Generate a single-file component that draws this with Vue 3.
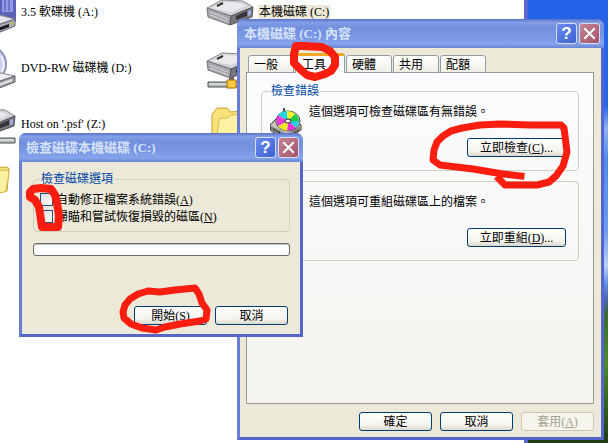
<template>
  <div class="desktop">
    <div class="explorer">
      <ul class="files">
        <li v-for="(f, i) in files" :key="i" class="file">
          <svg class="file-icon" viewBox="0 0 48 48" aria-hidden="true">
            <template v-if="f.kind === 'floppy'">
              <path d="M8 4H50V33H8Z" fill="#5a63b8" stroke="#30367c" />
              <path d="M34 4H45V24H34Z" fill="#8f9be6" />
              <path d="M37 4V23M41 4V23" stroke="#4c55a8" />
              <path d="M6 34L31 27L47 31L24 39Z" fill="#e4e4ec" stroke="#88888e" />
              <path d="M24 39L47 31V38L25 47Z" fill="#a9a9b6" stroke="#66666e" />
              <path d="M27 41L41 36V39L27 44Z" fill="#16161c" />
              <path d="M42 35L45 34V36L42 37Z" fill="#b8c43c" />
            </template>
            <template v-else-if="f.kind === 'dvd'">
              <circle cx="20" cy="20" r="18" fill="#cdd0f0" stroke="#8f92b6" stroke-width="2" />
              <circle cx="20" cy="20" r="5" fill="#fff" stroke="#8e91b4" />
              <path d="M33 12Q38 20 34 28" fill="none" stroke="#f2f2ff" stroke-width="2" />
              <path d="M4 36L28 28L47 32L24 40Z" fill="#ececf0" stroke="#88888e" />
              <path d="M24 40L47 32V38L26 46Z" fill="#a2a2a8" stroke="#5c5c62" />
              <path d="M28 42L44 36" stroke="#e6e6ea" stroke-width="2" />
            </template>
            <template v-else-if="f.kind === 'folder'">
              <path d="M6 36V15Q6 13 8 12L10 9Q11 8 13 8L20 8Q22 8 23 10L24 12L38 11Q41 11 41 14L39 35L10 42Z" fill="#f7e27c" stroke="#c9a22c" />
              <path d="M10 41L13 20Q13 18 16 18L22 18L25 15L38 14Q41 14 41 17L38 34Q38 36 36 36Z" fill="#fdf1a4" stroke="#d9b84c" />
            </template>
            <g v-else :transform="f.kind === 'net' ? 'translate(0 -3)' : null">
              <path d="M1 20L16 12L37 13L47 19L25 28Z" fill="#d4d4d8" stroke="#88888e" />
              <path d="M6 20L18 14L34 15L40 18L25 24Z" fill="#eaeaec" />
              <path d="M1 20L25 28L24 37L2 29Z" fill="#a6a6ac" stroke="#77777c" />
              <path d="M25 28L47 19L46 29L24 37Z" fill="#77777e" stroke="#55555b" />
              <path d="M4 24L22 31M4 27L22 34" stroke="#d4d4d8" />
              <path d="M30 28L41 23V28L30 32Z" fill="#33333a" />
              <path d="M42 23L45 22V27L42 28Z" fill="#a4a8e4" />
              <path d="M11 18L17 15" stroke="#333" stroke-width="2" />
            </g>
            <g v-if="f.kind === 'net'">
              <path d="M23 33H28V38H23Z" fill="#66666c" />
              <path d="M2 38H47V43H2Z" fill="#b4bcbc" stroke="#4a4e50" />
              <path d="M3 40H46" stroke="#eef4f2" />
              <path v-if="i % 2" d="M21 36H30V44H21Z" fill="#ffcb3c" stroke="#a86c08" />
            </g>
          </svg>
          <span class="file-name" :class="{ selected: f.selected }">{{ f.name }}</span>
        </li>
      </ul>
    </div>

    <div class="window properties">
      <div class="title-bar">
        <span class="title">本機磁碟 (C:) 內容</span>
        <button class="caption help" aria-label="說明">?</button>
        <button class="caption close" aria-label="關閉">
          <svg viewBox="0 0 19 19"><path d="M5 5L14 14M14 5L5 14" /></svg>
        </button>
      </div>
      <div class="properties-body">
        <div class="tabs" role="tablist">
          <button
            v-for="t in tabs"
            :key="t"
            class="tab"
            :class="{ active: t === activeTab }"
            role="tab"
            :aria-selected="t === activeTab"
            @click="activeTab = t"
          >{{ t }}</button>
        </div>
        <div class="panel">
          <fieldset class="group tool">
            <legend>檢查錯誤</legend>
            <svg class="tool-icon" viewBox="0 0 32 32" aria-hidden="true">
              <path d="M0 17L13 4L14 0L16 6L31 17V22L17 31L1 23Z" fill="#c4c4bc" stroke="#33332f" />
              <path d="M1 18L17 26L31 18V22L17 30L1 23Z" fill="#85857d" />
              <path d="M3 21L14 27M19 28L29 22" stroke="#111" stroke-dasharray="2 1" />
              <ellipse cx="18" cy="13" rx="12" ry="10" fill="#f4f4f4" stroke="#444" />
              <path d="M18 13L8 7Q12 3 17 3Z" fill="#22d8e0" />
              <path d="M18 13L17 3Q22 3 25 6Z" fill="#f4ee28" />
              <path d="M18 13L25 6Q29 9 29 13Z" fill="#20cc40" />
              <path d="M18 13L29 13Q29 17 26 20Z" fill="#20d0dc" />
              <path d="M18 13L26 20Q22 23 17 23Z" fill="#ec30d8" />
              <path d="M18 13L17 23Q11 22 8 18Z" fill="#f0e824" />
              <path d="M18 13L8 18Q5 12 8 7Z" fill="#e440d4" />
              <ellipse cx="18" cy="13" rx="3" ry="2" fill="#fff" stroke="#222" />
            </svg>
            <p class="tool-text">這個選項可檢查磁碟區有無錯誤。</p>
            <button class="push wide">立即檢查(<u>C</u>)...</button>
          </fieldset>
          <fieldset class="group tool plain">
            <p class="tool-text">這個選項可重組磁碟區上的檔案。</p>
            <button class="push wide">立即重組(<u>D</u>)...</button>
          </fieldset>
        </div>
        <div class="buttons">
          <button class="push">確定</button>
          <button class="push">取消</button>
          <button class="push" disabled>套用(<u>A</u>)</button>
        </div>
      </div>
    </div>

    <div class="window check-disk">
      <div class="title-bar">
        <span class="title">檢查磁碟本機磁碟 (C:)</span>
        <button class="caption help" aria-label="說明">?</button>
        <button class="caption close" aria-label="關閉">
          <svg viewBox="0 0 19 19"><path d="M5 5L14 14M14 5L5 14" /></svg>
        </button>
      </div>
      <div class="check-body">
        <fieldset class="group options">
          <legend>檢查磁碟選項</legend>
          <label class="option"><input v-model="autoFix" type="checkbox" /><span>自動修正檔案系統錯誤(<u>A</u>)</span></label>
          <label class="option"><input v-model="scan" type="checkbox" /><span>掃瞄和嘗試恢復損毀的磁區(<u>N</u>)</span></label>
        </fieldset>
        <progress class="progress" value="0" max="100" aria-label="進度"></progress>
        <div class="buttons">
          <button class="push">開始(<u>S</u>)</button>
          <button class="push">取消</button>
        </div>
      </div>
    </div>

    <!-- red pen marks -->
    <svg class="marks" width="608" height="443" viewBox="0 0 608 443" aria-hidden="true">
      <path class="thick" d="M296 46L303 46L322 47L330 51L335 57L335 65L331 71L325 74L315 77L307 75L301 70L294 63L294 54Z" />
      <path d="M521 176L503 174L473 169L440 165L433 160L434 150L437 142L443 136L451 131L462 128L480 125L500 124L530 125L561 125L564 128L567 152L563 166L556 176L549 182L537 185L505 185L499 179" />
      <path class="thick" d="M51 189L41 188L33 189L30 192L30 197L35 200L39 207L41 220L42 227L58 227L59 216L57 203L55 195Z" />
      <path d="M123 312L125 305L130 299L138 294L148 291L160 292L175 290L195 288L199 294L202 303L207 310L206 319L200 321L180 324L165 327L156 330L142 328L131 324L124 318Z" />
    </svg>
  </div>
</template>

<script setup>
import { ref } from 'vue';

const files = [
  { kind: 'floppy', name: '3.5 軟碟機 (A:)' },
  { kind: 'drive', name: '本機磁碟 (C:)', selected: true },
  { kind: 'dvd', name: 'DVD-RW 磁碟機 (D:)' },
  { kind: 'net', name: '' },
  { kind: 'net', name: "Host on '.psf' (Z:)" },
  { kind: 'folder', name: '' },
  { kind: 'folder', name: '' },
];

const tabs = ['一般', '工具', '硬體', '共用', '配額'];
const activeTab = ref('工具');
const autoFix = ref(false);
const scan = ref(false);
</script>

<style>
body {
  margin: 0;
}
</style>

<style scoped>
* {
  box-sizing: border-box;
}
.desktop {
  position: relative;
  display: flex;
  min-height: 100vh;
  padding-right: 80px;
  overflow: hidden;
  font: 12px/14px 'Liberation Serif', 'Noto Sans CJK TC', serif;
  color: #000;
  background: linear-gradient(#2260e6 0, #2a68ea 24%, #8fb4f4 29%, #4f8af0 36%, #6c9cf2 52%, #b9d0f6 60%, #5f8fe8 64%, #4a62a4 68%, #3c6a34 71%, #4c8a2c 82%, #1c3c14 100%);
}
button,
input {
  margin: 0;
  font: inherit;
}
.explorer {
  flex: 1;
  background: #fff;
  border-right: 4px solid #5a66d2;
  overflow: hidden;
}
.files {
  display: grid;
  grid-template-columns: 238px 238px;
  grid-auto-rows: 56px;
  margin: -16px 0 0 -32px;
  padding: 0;
  list-style: none;
}
.file {
  display: flex;
  align-items: center;
  gap: 4px;
}
.file-icon {
  width: 48px;
  height: 48px;
}
.file-name {
  padding: 0 1px;
}
.selected {
  background: #ece9d8;
}

/* windows */
.window {
  position: absolute;
  border: 3px solid #6a7cd8;
  border-top: 0;
  border-right-color: #5566c8;
  border-bottom-color: #5566c8;
  border-radius: 7px 7px 0 0;
  background: #ece9d8;
}
.properties {
  left: 237px;
  top: 19px;
  width: 367px;
}
.check-disk {
  left: 19px;
  top: 133px;
  width: 284px;
}
.title-bar {
  display: flex;
  align-items: center;
  gap: 2px;
  height: 29px;
  margin: 0 -3px;
  padding: 0 4px 0 7px;
  border-radius: 7px 7px 0 0;
  background: linear-gradient(#5872ca 0, #829ee6 12%, #7290de 30%, #7896e2 60%, #86a4ec 86%, #6a84d4 100%);
}
.title {
  flex: 1;
  font-size: 13px;
  font-weight: bold;
  color: #d6e2fa;
}
.caption {
  width: 21px;
  height: 21px;
  padding: 0;
  border: 1px solid #d4def8;
  border-radius: 3px;
  color: #fff;
}
.help {
  background: linear-gradient(135deg, #6c8cec, #3c60d4);
  font: bold 17px/18px 'Liberation Sans', sans-serif;
}
.close {
  background: linear-gradient(135deg, #c48494, #a45468);
}
.close svg {
  display: block;
  width: 19px;
  height: 19px;
  fill: none;
  stroke: #fff;
  stroke-width: 2;
  stroke-linecap: square;
}
.properties-body {
  padding: 5px 7px 6px 6px;
}

/* tabs */
.tabs {
  display: flex;
  align-items: flex-end;
  gap: 1px;
  height: 20px;
  margin-bottom: -1px;
  padding-left: 2px;
}
.tab {
  width: 46px;
  height: 18px;
  padding: 1px 5px 0;
  border: 1px solid #91a0a6;
  border-radius: 3px 3px 0 0;
  background: linear-gradient(#fff, #f0efe6);
  text-align: left;
}
.tab.active {
  width: 50px;
  height: 20px;
  padding: 0 6px;
  border-top: 3px solid #f0a828;
  border-bottom: 0;
  background: #fcfcfe;
}
.panel {
  min-height: 332px;
  padding: 11px 14px;
  border: 1px solid #919b9c;
  background: linear-gradient(#fcfcfe, #f4f3ee);
}
.group {
  margin: 0;
  border: 1px solid #d0d0bf;
  border-radius: 4px;
}
legend {
  padding: 0 1px;
  color: #0046a5;
}
.tool {
  display: grid;
  grid-template-columns: 32px 1fr;
  column-gap: 7px;
  row-gap: 19px;
  padding: 7px 12px 13px 8px;
}
.plain {
  margin-top: 10px;
  padding-top: 13px;
}
.tool-icon {
  width: 32px;
  height: 32px;
  grid-row: 1 / 3;
  margin-top: 3px;
}
.tool-text {
  grid-column: 2;
  margin: 0;
}
.tool .push {
  grid-column: 2;
  justify-self: end;
}
.push {
  width: 73px;
  height: 19px;
  padding: 0;
  border: 1px solid #003c74;
  border-radius: 3px;
  background: linear-gradient(#fff, #f4f3ee 70%, #dcd8cc);
  color: #000;
}
.push.wide {
  width: 99px;
}
.push:disabled {
  border-color: #c9c7ba;
  background: #f5f4ea;
  color: #a1a192;
}
.buttons {
  display: flex;
  justify-content: flex-end;
  gap: 8px;
  margin-top: 8px;
}

/* check disk */
.check-body {
  padding: 10px 10px 9px 11px;
}
.options {
  padding: 5px 6px 6px;
}
.option {
  display: flex;
  align-items: center;
  gap: 3px;
  height: 17px;
}
.option input {
  appearance: none;
  width: 13px;
  height: 13px;
  border: 1px solid #1c5180;
  background: linear-gradient(135deg, #dcdcd7, #fff);
}
.progress {
  appearance: none;
  display: block;
  width: 100%;
  height: 13px;
  margin-top: 11px;
  border: 1px solid #686868;
  border-radius: 3px;
  background: #fff;
  box-shadow: inset 0 1px 1px #bebebe;
}
.progress::-webkit-progress-bar {
  background: transparent;
}
.check-body .buttons {
  margin-top: 50px;
  padding-right: 2px;
}
.marks {
  position: absolute;
  left: 0;
  top: 0;
  fill: none;
  stroke: #fa1e10;
  stroke-width: 7;
  stroke-linejoin: round;
  stroke-linecap: square;
  pointer-events: none;
}
.marks .thick {
  stroke-width: 8;
}
</style>
